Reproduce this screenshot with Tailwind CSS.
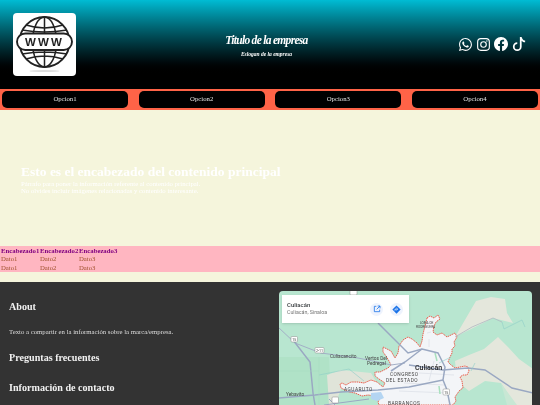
<!DOCTYPE html>
<html class="bg-[#f5f5dc]"><head><meta charset="utf-8"><script src="https://cdn.jsdelivr.net/npm/@tailwindcss/browser@4"></script></head>
<body class="font-['Liberation_Serif',serif] h-[405px] overflow-hidden">
<div class="will-change-transform h-[405px] overflow-hidden">
<header class="h-[89px] bg-gradient-to-b from-[#00bcd4] to-[#000000] to-[85%] flex items-center pl-[13px] pr-[14px]">
  <div class="w-[63px] h-[63px] bg-white rounded-[4px] shrink-0 mt-[-1px]">
    <svg viewBox="0 0 63 63" class="w-[63px] h-[63px]" fill="none" stroke="#222" stroke-width="1.5">
      <ellipse cx="31.5" cy="58" rx="15" ry="1" fill="#ddd" stroke="none"/>
      <circle cx="31.5" cy="29" r="25" stroke-width="1.9"/>
      <ellipse cx="31.5" cy="29" rx="12" ry="25"/>
      <path d="M31.5 4V20M31.5 38V54M13 12Q31.5 18 50 12M13 46Q31.5 40 50 46M9 17Q31.5 21 54 17M9 41Q31.5 37 54 41"/>
      <rect x="4" y="20.5" width="55" height="16.5" rx="8.2" fill="#fff" stroke-width="1.9"/>
      <text x="31.5" y="33" text-anchor="middle" fill="#222" stroke="none" font-family="Liberation Sans" font-weight="700" font-size="11.5" letter-spacing="2.2">WWW</text>
    </svg>
  </div>
  <div class="flex-1 flex flex-col items-center text-white italic mt-[1px] mr-[2px]">
    <div class="text-[11.5px] leading-[15px] tracking-[-0.7px] font-semibold">Titulo de la empresa</div>
    <div class="text-[5.5px] leading-[8px] mt-[2px] font-semibold">Eslogan de la empresa</div>
  </div>
  <div class="flex items-center text-white mt-[-1px]">
    <svg viewBox="0 0 16 16" class="w-[13px] h-[13px]" fill="currentColor"><path d="M13.601 2.326A7.854 7.854 0 0 0 7.994 0C3.627 0 .068 3.558.064 7.926c0 1.399.366 2.76 1.057 3.965L0 16l4.204-1.102a7.933 7.933 0 0 0 3.79.965h.004c4.368 0 7.926-3.558 7.93-7.93A7.898 7.898 0 0 0 13.6 2.326zM7.994 14.521a6.573 6.573 0 0 1-3.356-.92l-.24-.144-2.494.654.666-2.433-.156-.251a6.56 6.56 0 0 1-1.007-3.505c0-3.626 2.957-6.584 6.591-6.584a6.56 6.56 0 0 1 4.66 1.931 6.557 6.557 0 0 1 1.928 4.66c-.004 3.639-2.961 6.592-6.592 6.592zm3.615-4.934c-.197-.099-1.17-.578-1.353-.646-.182-.065-.315-.099-.445.099-.133.197-.513.646-.627.775-.114.133-.232.148-.43.05-.197-.1-.836-.308-1.592-.985-.59-.525-.985-1.175-1.103-1.372-.114-.198-.011-.304.088-.403.087-.088.197-.232.296-.346.1-.114.133-.198.198-.33.065-.134.034-.248-.015-.347-.05-.099-.445-1.076-.612-1.47-.16-.389-.323-.335-.445-.34-.114-.007-.247-.007-.38-.007a.729.729 0 0 0-.529.247c-.182.198-.691.677-.691 1.654 0 .977.71 1.916.81 2.049.098.133 1.394 2.132 3.383 2.992.47.205.84.326 1.129.418.475.152.904.129 1.246.08.38-.058 1.171-.48 1.338-.943.164-.464.164-.86.114-.943-.049-.084-.182-.133-.38-.232z"/></svg>
    <svg viewBox="0 0 16 16" class="w-[13px] h-[13px] ml-[5px]" fill="none" stroke="currentColor" stroke-width="1.4"><rect x=".8" y=".8" width="14.4" height="14.4" rx="4"/><circle cx="8" cy="8" r="3.4"/><circle cx="12.2" cy="3.8" r=".9" fill="currentColor" stroke="none"/></svg>
    <svg viewBox="0 0 16 16" class="w-[14px] h-[14px] ml-[4px]" fill="currentColor"><path d="M16 8.049c0-4.446-3.582-8.05-8-8.05C3.58 0-.002 3.603-.002 8.05c0 4.017 2.926 7.347 6.75 7.951v-5.625h-2.03V8.05H6.75V6.275c0-2.017 1.195-3.131 3.022-3.131.876 0 1.791.157 1.791.157v1.98h-1.009c-.993 0-1.303.621-1.303 1.258v1.51h2.218l-.354 2.326H9.25V16c3.824-.604 6.75-3.934 6.75-7.951z"/></svg>
    <svg viewBox="0 0 16 16" class="w-[14px] h-[14px] ml-[4px]" fill="currentColor"><path d="M9 0h1.98c.144.715.54 1.617 1.235 2.512C12.895 3.389 13.797 4 15 4v2c-1.753 0-3.07-.814-4-1.829V11a5 5 0 1 1-5-5v2a3 3 0 1 0 3 3V0Z"/></svg>
  </div>
</header>
<nav class="h-[21px] bg-[#ff6347] flex items-center justify-between px-[2px]">
  <a class="w-[126px] h-[17px] bg-black rounded-[5px] text-[#e5e5e5] text-[6.75px] flex items-center justify-center">Opcion1</a>
  <a class="w-[126px] h-[17px] bg-black rounded-[5px] text-[#e5e5e5] text-[6.75px] flex items-center justify-center">Opcion2</a>
  <a class="w-[126px] h-[17px] bg-black rounded-[5px] text-[#e5e5e5] text-[6.75px] flex items-center justify-center">Opcion3</a>
  <a class="w-[126px] h-[17px] bg-black rounded-[5px] text-[#e5e5e5] text-[6.75px] flex items-center justify-center">Opcion4</a>
</nav>
<main class="h-[136px] flex flex-col justify-center pl-[21px] text-white pt-[2px]">
  <h1 class="text-[13.5px] leading-[16px] font-bold">Esto es el encabezado del contenido principal</h1>
  <p class="text-[6.75px] leading-[7.5px]">Párrafo para poner la información referente al contenido principal.</p>
  <p class="text-[6.75px] leading-[7.5px]">No olvides incluir imágenes relacionadas y contenido interesante.</p>
</main>
<div class="bg-[#ffb6c1] h-[26px] text-[6.75px] leading-[8.5px] grid grid-cols-[39px_39px_39px] pl-[1px] pt-[0.5px] content-start">
  <b class="text-[#800080]">Encabezado1</b><b class="text-[#800080]">Encabezado2</b><b class="text-[#800080]">Encabezado3</b>
  <span class="text-[#a0522d]">Dato1</span><span class="text-[#a0522d]">Dato2</span><span class="text-[#a0522d]">Dato3</span>
  <span class="text-[#a0522d]">Dato1</span><span class="text-[#a0522d]">Dato2</span><span class="text-[#a0522d]">Dato3</span>
</div>
<footer class="mt-[10px] h-[123px] bg-[#333333] flex pl-[9px] pr-[9px] pt-[9px] overflow-hidden">
  <div class="w-[270px] shrink-0">
    <h2 class="text-[10.125px] leading-[13px] font-bold mt-[9px] text-[#f2f2f2]">About</h2>
    <p class="text-[6.75px] leading-[8px] mt-[15px] text-[#dddddd]">Texto a compartir en la información sobre la marca/empresa.</p>
    <h2 class="text-[10.125px] leading-[13px] font-bold mt-[15px] text-[#f2f2f2]">Preguntas frecuentes</h2>
    <h2 class="text-[10.125px] leading-[13px] font-bold mt-[17px] text-[#f2f2f2]">Información de contacto</h2>
  </div>
  <div class="relative w-[253px] h-[114px] rounded-t-[4px] overflow-hidden font-['Roboto',sans-serif] shrink-0">
    <svg viewBox="0 0 253 114" class="absolute inset-0 w-[253px] h-[114px]" fill="none">
      <rect width="253" height="114" fill="#b8e6d0"/>
      <path d="M0 66H50L52 114H0Z" fill="#b0e2c7"/>
      <path d="M197 10L212 6L226 8L228 22L234 32L214 27L194 37L176 46L190 22Z" fill="#e4e7dc"/>
      <path d="M176 70L190 64L205 58L219 46L229 56L240 68L254 78V114H236L222 92L206 90L190 100L178 90Z" fill="#e4e7dc"/>
      <path d="M222 92L238 114H253V114H228Z" fill="#c8e7d4"/>
      <path d="M48 84L62 79L92 82L98 92L62 98L56 114H50Z" fill="#e0e4d9"/>
      <path d="M148 27L151 25L155 27L159 24L161 28L157 31L155 35L154 41L158 44L163 42L168 46L172 44L176 42L178 46L175 51L176 55L173 58L173 62L171 66L169 71L172 74L176 77L181 76L186 75L189 76L190 80L188 84L184 84L181 86L183 90L184 97L181 99L178 103L176 106L177 110L174 114H100L99 111L102 106L96 105L89 104L83 105L76 102L70 101L62 97L61 93L63 92L67 94L72 91L79 91L85 92L92 89L98 91L104 96L106 92L100 88L96 85L96 81L101 81L105 79L109 77L112 74L110 70L107 65L104 61L104 56L108 58L112 60L116 67L119 62L120 55L124 49L129 46L133 48L138 52L141 56L143 50L144 43L146 35Z" fill="#f3f5f8" stroke="#ea5f4e" stroke-width="1" stroke-dasharray="1.5 .7"/>
      <path d="M92 102L102 101L105 107L98 110L92 108Z" fill="#b4d5f2"/>
      <path d="M148 42L152 41M150 48V56M155 70L150 90M140 82L175 84M125 92L165 94M120 100L170 102" stroke="#dde1e9" stroke-width=".8"/>
      <path d="M156 62L158 70M160 95L161 103" stroke="#a8e0bd" stroke-width="1.5"/>
      <path d="M-1 36L16 52L34 59L42 62L79 67L99 71L112 74L126 72" stroke="#a3afc6" stroke-width="1"/>
      <path d="M14 49L31 71L34 102L36 114" stroke="#9aa8c2" stroke-width="1.5"/>
      <path d="M-1 107L36 104L62 101L99 99L130 96L164 89" stroke="#9aa8c2" stroke-width="1.5"/>
      <path d="M99 32L129 62L143 58L159 62L166 76L164 89L168 99L171 114" stroke="#9aa8c2" stroke-width="1.5"/>
      <path d="M112 80L126 71L143 58M130 74L164 79L189 77L206 79L233 97L254 102" stroke="#9aa8c2" stroke-width="1.5"/>
      <path d="M176 46L193 36L214 27L223 31" stroke="#aeb9c2" stroke-width=".8"/>
      <path d="M223 31L225 38L243 29L246 36M40 84L70 78L85 90M160 72L172 66M196 72L192 80" stroke="#8fcfc8" stroke-width=".6"/>
      <path d="M40 66V114M0 80L40 80" stroke="#a6d9bd" stroke-width=".5"/>
      <path d="M50 108L56 114M45 114L90 108" stroke="#9aa8c2" stroke-width="1"/>
      <g fill="#fff" stroke="#888" stroke-width=".5"><rect x="12" y="45.5" width="6.5" height="5.5" rx="1"/><rect x="36" y="56.5" width="9" height="5.5" rx="1"/><rect x="164" y="98" width="6.5" height="6" rx="1"/><rect x="53" y="106" width="6.5" height="6" rx="1"/><rect x="71" y="-2" width="7" height="6" rx="1"/></g>
      <g font-family="Roboto" fill="#444" font-size="4.6">
        <text x="13.2" y="50" font-size="3.6">15</text><text x="37" y="60.8" font-size="3.6">2-11</text><text x="165.2" y="102.8" font-size="3.6">15</text>
        <text x="51" y="67" font-size="4.8">Culiacancito</text><text x="86" y="69" font-size="4.8">Vertos Del</text><text x="88" y="74" font-size="4.8">Pedregal</text>
        <text x="136" y="78.5" font-size="7" fill="#222" font-weight="500">Culiacán</text>
        <text x="111" y="85" font-size="4.8" letter-spacing=".45">CONGRESO</text><text x="107" y="90.5" font-size="4.8" letter-spacing=".45">DEL ESTADO</text>
        <text x="65" y="100" font-size="4.8" letter-spacing=".5">AGUARUTO</text><text x="7" y="105" font-size="4.8">Yebavito</text>
        <text x="109" y="113.5" font-size="4.8" letter-spacing=".5">BARRANCOS</text>
        <text x="141" y="33" font-size="3.2">LOMA DE</text><text x="137" y="37" font-size="3.2">RODRIGUERA</text>
      </g>
    </svg>
    <div class="absolute left-[3px] top-[4px] w-[127px] h-[28px] bg-white flex items-center pl-[5px] shadow-sm">
      <div class="flex-1 leading-none">
        <div class="text-[6px] text-[#3c4043] font-medium">Culiacán</div>
        <div class="text-[5.3px] text-[#777] mt-[2px]">Culiacán, Sinaloa</div>
      </div>
      <div class="w-[13px] h-[13px] rounded-full bg-[#eef3fd] flex items-center justify-center mr-[7px]">
        <svg viewBox="0 0 12 12" class="w-[8px] h-[8px]" fill="none" stroke="#1a73e8" stroke-width="1.2"><path d="M5 2H2V10H10V7M7 1.5H10.5V5M10.5 1.5L5.5 6.5"/></svg>
      </div>
      <div class="w-[13px] h-[13px] rounded-full bg-[#eef3fd] flex items-center justify-center mr-[6px]">
        <svg viewBox="0 0 12 12" class="w-[9px] h-[9px]"><path d="M6 .5L11.5 6L6 11.5L.5 6Z" fill="#1a73e8"/><path d="M4 7.5V5.5H7M6 4L7.6 5.5L6 7" fill="none" stroke="#fff" stroke-width=".9"/></svg>
      </div>
    </div>
  </div>
</footer>
</div>
</body></html>
